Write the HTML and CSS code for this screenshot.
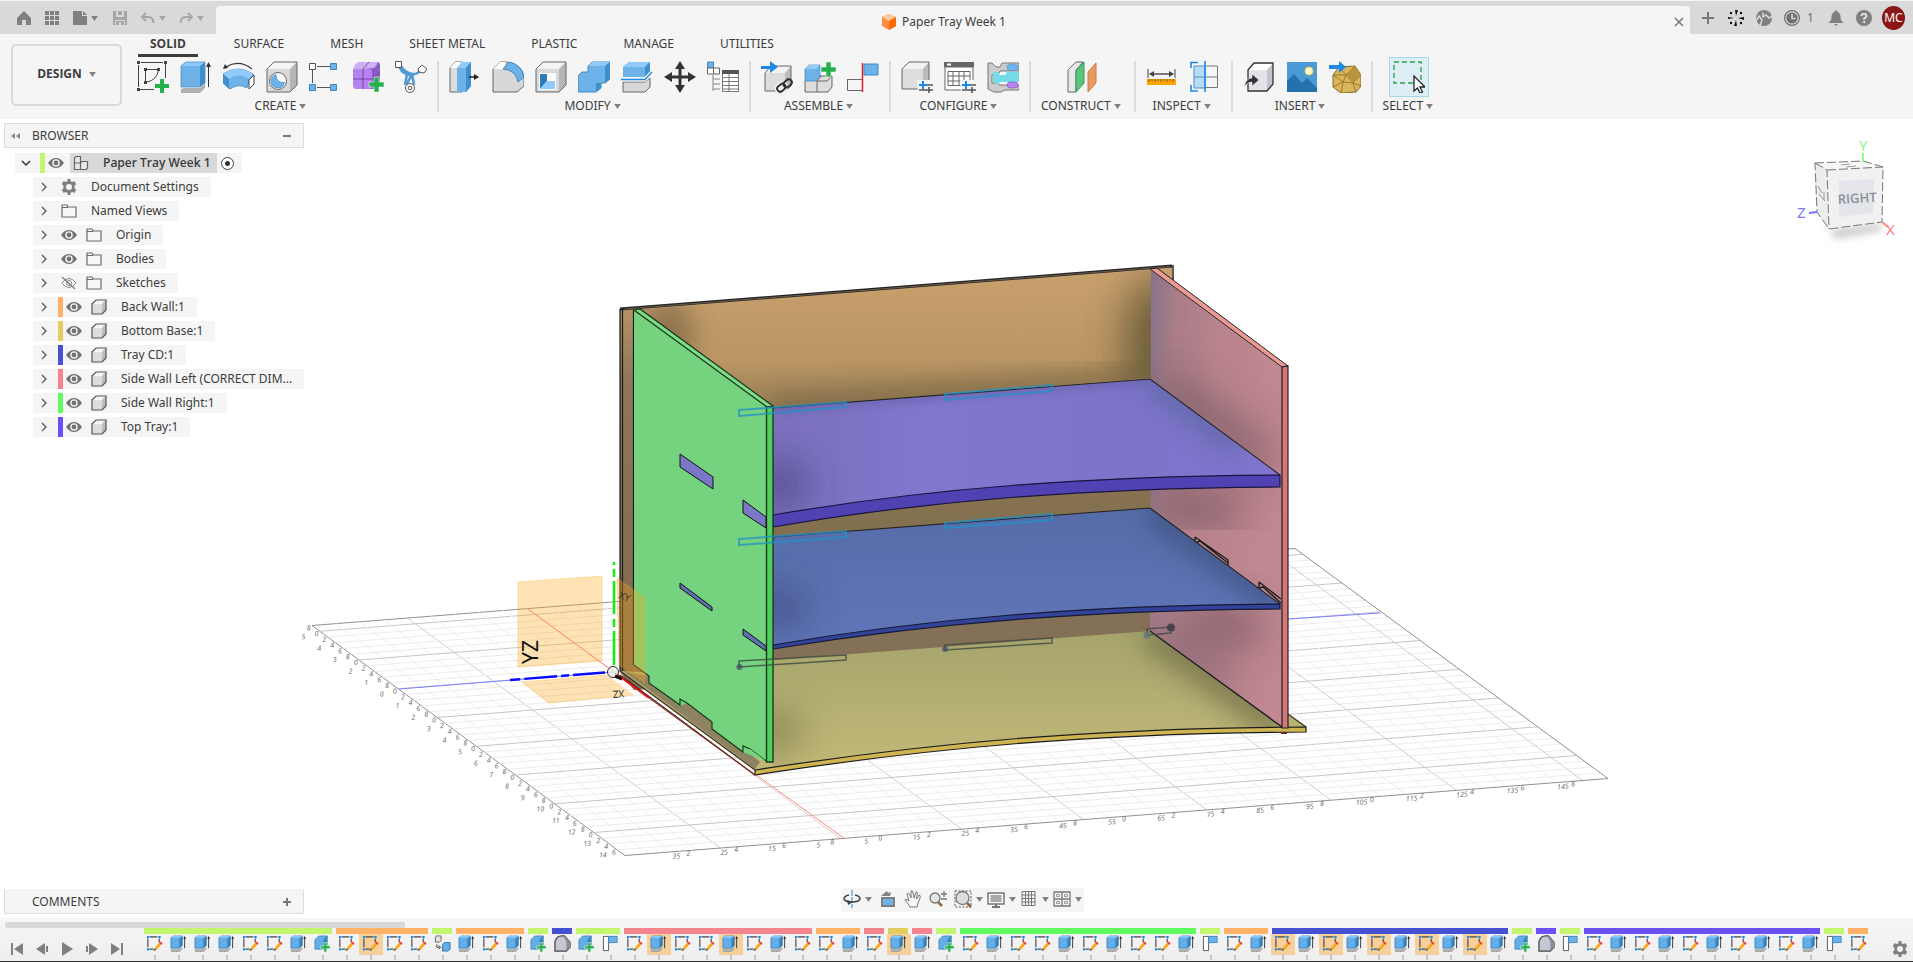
FILE: index.html
```html
<!DOCTYPE html>
<html lang="en">
<head>
<meta charset="utf-8">
<title>Paper Tray Week 1</title>
<link rel="stylesheet" href="styles.css">
</head>
<body>
<svg class="sprite" aria-hidden="true">
  <symbol id="caret" viewBox="0 0 8 6"><path d="M0 0H8L4 6Z" fill="currentColor"/></symbol>
  <symbol id="home" viewBox="0 0 16 16"><path d="M8 1 1 8V15H6V10H10V15H15V8Z" fill="currentColor"/></symbol>
  <symbol id="apps" viewBox="0 0 16 16"><path d="M1 1h4v4H1zM6 1h4v4H6zM11 1h4v4h-4zM1 6h4v4H1zM6 6h4v4H6zM11 6h4v4h-4zM1 11h4v4H1zM6 11h4v4H6zM11 11h4v4h-4z" fill="currentColor"/></symbol>
  <symbol id="file" viewBox="0 0 16 16"><path d="M1 1H10V6H15V15H1ZM11 1 15 5H11Z" fill="currentColor"/></symbol>
  <symbol id="save" viewBox="0 0 16 16"><path d="M1 1H4V7H12V1H15V15H13V10H3V15H1ZM6 1h4v4H6zM4 11h8v4H9v-3H7v3H4z" fill="currentColor"/></symbol>
  <symbol id="undo" viewBox="0 0 16 16"><path d="M6 3 2 7 6 11M2 7H8Q13 7 13.500 13" fill="none" stroke="currentColor" stroke-width="2"/></symbol>
  <symbol id="redo" viewBox="0 0 16 16"><path d="M10 3 14 7 10 11M14 7H8Q3 7 2.500 13" fill="none" stroke="currentColor" stroke-width="2"/></symbol>
  <symbol id="ocube" viewBox="0 0 16 18"><path d="M8 1 15 4V13L8 17 1 13V4Z" fill="#ff8f3f"/><path d="M8 1 15 4 8 8 1 4Z" fill="#ffc9a3"/><path d="M8 8 15 4V13L8 17Z" fill="#ff6a05"/></symbol>
  <symbol id="spark" viewBox="0 0 18 18"><g fill="#111"><path d="M8 1 11 1 9 7ZM7 17 10 17 9 11ZM1 8 7 9 1 10ZM17 8 11 9 17 11Z"/><circle cx="4" cy="4" r="1.2"/><circle cx="14" cy="4" r="1.2"/><circle cx="4" cy="14" r="1.2"/><circle cx="14" cy="14" r="1.2"/></g></symbol>
  <symbol id="ext" viewBox="0 0 18 18"><circle cx="9" cy="9" r="8" fill="currentColor"/><path d="M1 12 4 7 7 11 5 17M8 3.500V8.500M8 8 11 6 14 9 17.500 7" stroke="#d9d9d9" stroke-width="1.500" fill="none"/></symbol>
  <symbol id="clock" viewBox="0 0 18 18"><circle cx="9" cy="9" r="7.400" fill="none" stroke="currentColor" stroke-width="1.200"/><circle cx="9" cy="9" r="5.600" fill="currentColor"/><path d="M9 5V9.500H12.500" stroke="#d9d9d9" stroke-width="1.500" fill="none"/></symbol>
  <symbol id="bell" viewBox="0 0 18 18"><path d="M9 1Q10 1 10 2.500Q13.500 3.500 13.500 8Q13.500 12 16 13V14H2V13Q4.500 12 4.500 8Q4.500 3.500 8 2.500Q8 1 9 1ZM7 15H11L9 17Z" fill="currentColor"/></symbol>
  <symbol id="help" viewBox="0 0 18 18"><circle cx="9" cy="9" r="8" fill="currentColor"/><path d="M6.500 7Q6.500 4.800 9 4.800T11.500 7Q11.500 8.500 9.200 9.300V10.700M9.200 12V14" stroke="#e8e8e8" stroke-width="1.800" fill="none"/></symbol>
  <symbol id="chev" viewBox="0 0 10 10"><path d="M3 1 7 5 3 9" fill="none" stroke="#555" stroke-width="1.200"/></symbol>
  <symbol id="chevd" viewBox="0 0 10 10"><path d="M1 3 5 7 9 3" fill="none" stroke="#333" stroke-width="1.500"/></symbol>
  <symbol id="eye" viewBox="0 0 16 12"><path d="M0 6Q3.500 1 8 1T16 6Q12.500 11 8 11T0 6Z" fill="#727272"/><circle cx="8" cy="6" r="3.100" fill="#727272" stroke="#f5f5f5" stroke-width="1.400"/></symbol>
  <symbol id="eyeoff" viewBox="0 0 16 12"><path d="M1 6Q4 1.500 8 1.500T15 6Q12 10.500 8 10.500T1 6Z" fill="none" stroke="#8a8a8a"/><circle cx="8" cy="6" r="2.500" fill="none" stroke="#8a8a8a"/><path d="M1 0 14 12" stroke="#777" stroke-width="1.200"/></symbol>
  <symbol id="folder" viewBox="0 0 16 14"><path d="M1 1H6L7 3H15V13H1Z" fill="#f8f8f8" stroke="#6a6a6a" stroke-width="1.200"/><path d="M1 3.500H7" stroke="#6a6a6a"/></symbol>
  <symbol id="gear" viewBox="0 0 16 16"><path fill-rule="evenodd" d="M6.500 0H9.500V2.200L11.300 3 13.300 1.900 15.300 5.200 13.600 6.600V9.400L15.300 10.800 13.300 14.100 11.300 13 9.500 13.800V16H6.500V13.800L4.700 13 2.700 14.100 .7 10.800 2.400 9.400V6.600L.7 5.200 2.700 1.900 4.700 3 6.500 2.200ZM8 5A3 3 0 1 0 8 11A3 3 0 1 0 8 5Z" fill="#808080"/></symbol>
  <symbol id="body" viewBox="0 0 16 16"><path d="M1 5 5 1H15V11L11 15H1Z" fill="#dedede"/><path d="M1 5 5 1H15L11 5Z" fill="#f5f5f5"/><path d="M11 5 15 1V11L11 15Z" fill="#bdbdbd"/><path d="M1 5 5 1H15V11L11 15H1Z" fill="none" stroke="#555" stroke-width="1.200"/></symbol>
  <symbol id="asm" viewBox="0 0 16 16"><path d="M1.500 3 3 1.500H7.500V8H1.500ZM1.500 8H7.500V14.500H1.500ZM7.500 8 9 6.500H14.500V13L13 14.500H7.500Z" fill="#e8e8e8" stroke="#666" stroke-width="1.200"/></symbol>

  <symbol id="i-sketch" viewBox="0 0 32 32"><path d="M1.500 4V26M4 1.500H26M28.500 3V17M3 28.500H17" stroke="#444" stroke-width="1" fill="none"/><path d="M0 0h3v3H0zM27 0h3v3h-3zM0 27h3v3H0zM7 7h3v3H7zM20 7h3v3h-3zM7 20h3v3H7z" fill="#444"/><path d="M8.500 9V21M9 8.500H21M21.500 9Q20 19 10 21" stroke="#444" fill="none"/><path d="M23 18h4v5h5v4h-5v5h-4v-5h-5v-4h5z" fill="#22b14c"/></symbol>
  <symbol id="i-extrude" viewBox="0 0 32 32"><path d="M1 28 4 27H20L25 23V27L20 32H1Z" fill="#b0b0b0"/><path d="M1 5 6 1H25L20 5V26H1Z" fill="#6db3ea"/><path d="M1 5 6 1H25L20 5Z" fill="#90cbfb"/><path d="M20 5 25 1V22L20 26Z" fill="#3f8fcd"/><path d="M1 5 6 1H25V22L20 26H1Z" fill="none" stroke="#3f87c0" stroke-width=".7"/><path d="M28.500 26V4" stroke="#333"/><path d="M26 6 28.500 1 31 6Z" fill="#333"/></symbol>
  <symbol id="i-revolve" viewBox="0 0 32 32"><path d="M0 13Q15 3 30 13L31 16 27 17 24 27Q15 22 7 28L0 22Z" fill="#6db3ea" stroke="#2c7ab8" stroke-width=".7"/><path d="M0 13Q15 3 30 13L26 18Q15 11 6 18Z" fill="#90cbfb"/><path d="M0 13 6 18V28L0 22Z" fill="#3f8fcd"/><path d="M26 19 31 14V23L26 28Z" fill="#fff" stroke="#444"/><path d="M3 6Q16-2 29 8" fill="none" stroke="#333" stroke-width="1.200"/><path d="M0 8 2 3 5 7Z" fill="#333"/></symbol>
  <symbol id="i-hole" viewBox="0 0 32 32"><path d="M1 8 8 1H31V24L24 31H1Z" fill="#d8d8d8"/><path d="M1 8 8 1H31L24 8Z" fill="#f4f4f4"/><path d="M24 8 31 1V24L24 31Z" fill="#b5b5b5"/><path d="M1 8 8 1H31V24L24 31H1Z" fill="none" stroke="#666"/><circle cx="12" cy="20" r="8.500" fill="#fff" stroke="#666"/><path d="M10 13.500Q10 22 18.500 21.500Q17 27 12 27Q5.500 26.500 5 20Q5 15 10 13.500Z" fill="#6db3ea" stroke="#3f87c0" stroke-width=".7"/></symbol>
  <symbol id="i-pattern" viewBox="0 0 32 32"><path d="M8 5.500H21M3.500 9V22M8 26.500H21" stroke="#555"/><path d="M.5 2.500h6v6h-6z" fill="#fff" stroke="#555"/><path d="M21.500 2.500h6v6h-6zM.5 23.500h6v6h-6zM21.500 23.500h6v6h-6z" fill="#6db3ea" stroke="#3f87c0"/></symbol>
  <symbol id="i-form" viewBox="0 0 32 32"><path d="M1 9Q1 7 7 1H25Q28 1 28 4V22L22 28H5Q1 28 1 23Z" fill="#8a5bc5"/><path d="M1 9Q3 1 7 1H25Q27 2 22 7Z" fill="#d0b0f5"/><rect x="1" y="8" width="20" height="20" rx="4" fill="#b583f0"/><path d="M11 8V28M1 18H21M11 8 17 1M21 18 28 11M21 9V27" stroke="#6c3fa0" stroke-width=".9" fill="none"/><path d="M22 16h5v5h5v5h-5v5h-5v-5h-5v-5h5z" fill="#22b14c" stroke="#f5f5f5" stroke-width=".6"/></symbol>
  <symbol id="i-gen" viewBox="0 0 32 32"><path d="M4 4Q6 12 12 13L10 24M27 8Q22 14 17 13L19 24M12 13Q15 15 17 13M5 4Q10 12 17 13L12 23" fill="none" stroke="#4f9bd6" stroke-width="2.600"/><path d="M.5.5h6v6h-6zM23 8 27 4 32 8 29 12 24 11Z" fill="#fff" stroke="#555"/><circle cx="15" cy="27" r="4.500" fill="#fff" stroke="#555"/><circle cx="15" cy="27" r="1.800" fill="none" stroke="#555"/></symbol>
  <symbol id="i-presspull" viewBox="0 0 32 32"><path d="M1 7 6 1H13V31H1Z" fill="#ddd" stroke="#666"/><path d="M1 7 6 1H13L8 7Z" fill="#fff"/><path d="M8 7 13 1H22V25L17 31H8Z" fill="#6db3ea"/><path d="M8 7 13 1H22L17 7Z" fill="#90cbfb"/><path d="M17 7 22 1V25L17 31Z" fill="#3f8fcd"/><path d="M20 16H27" stroke="#222" stroke-width="1.500"/><path d="M25 13 30 16 25 19Z" fill="#222"/></symbol>
  <symbol id="i-fillet" viewBox="0 0 32 32"><path d="M1 8 8 1H14Q31 3 32 17V25L25 31H1Z" fill="#d8d8d8" stroke="#666"/><path d="M1 8 8 1H14L11 8Z" fill="#fff"/><path d="M11 8 17 1Q29 3 32 16L26 21Q24 9 11 8Z" fill="#6db3ea" stroke="#3f87c0"/></symbol>
  <symbol id="i-shell" viewBox="0 0 32 32"><path d="M1 8 8 1H31V24L24 31H1Z" fill="#d8d8d8"/><path d="M1 8 8 1H31L24 8Z" fill="#f4f4f4"/><path d="M24 8 31 1V24L24 31Z" fill="#b5b5b5"/><path d="M1 8 8 1H31V24L24 31H1Z" fill="none" stroke="#666"/><path d="M4 12h17v17H4z" fill="#fff"/><path d="M5 13H12V20L5 28Z" fill="#2c7ab8"/><path d="M5 28 12 20H20V28Z" fill="#90cbfb"/></symbol>
  <symbol id="i-combine" viewBox="0 0 32 32"><path d="M0 15 4 11H10V5L14 1H32V18L27 22H23V27L18 31H0Z" fill="#6db3ea" stroke="#3f87c0"/><path d="M10 5 14 1H32L27 5Z" fill="#90cbfb"/><path d="M27 5 32 1V18L27 22ZM18 22H23V27L18 31Z" fill="#3f8fcd"/></symbol>
  <symbol id="i-split" viewBox="0 0 32 32"><path d="M2 6 8 1H29V11L24 16H2Z" fill="#6db3ea"/><path d="M2 6 8 1H29L24 6Z" fill="#90cbfb"/><path d="M24 6 29 1V11L24 16Z" fill="#3f8fcd"/><path d="M2 21H24L29 17V26L24 31H2Z" fill="#d8d8d8" stroke="#666"/><path d="M0 18.500H24L31 11" fill="none" stroke="#f5f5f5" stroke-width="4"/><path d="M0 18.500H24L31 11" fill="none" stroke="#1e88e5" stroke-width="1.300"/></symbol>
  <symbol id="i-move" viewBox="0 0 32 32"><path d="M16 0 21 8H17.500V14.500H24V11L32 16 24 21V17.500H17.500V24H21L16 32 11 24H14.500V17.500H8V21L0 16 8 11V14.500H14.500V8H11Z" fill="#333"/></symbol>
  <symbol id="i-params" viewBox="0 0 32 32"><path d="M.5 1h6v6h-6z" fill="#6db3ea" stroke="#3f87c0"/><path d="M.5 7h6v6h-6zM6.500 7h6v6h-6z" fill="#fff" stroke="#666"/><path d="M6 14V30M6 18H13M6 23H13M6 28H13" stroke="#888" fill="none"/><path d="M15.500 9.500h16v21h-16z" fill="#fff" stroke="#777"/><path d="M15 9h17v4H15z" fill="#555"/><path d="M16 16.500H31M16 20.500H31M16 24.500H31M16 28H31M22 13V31" stroke="#777"/></symbol>
  <symbol id="i-insertc" viewBox="0 0 32 32"><path d="M4 12 10 5H30V25L24 30H4Z" fill="#ddd"/><path d="M4 12 10 5H30L24 12Z" fill="#f2f2f2"/><path d="M24 12 30 5V25L24 30Z" fill="#bbb"/><path d="M4 12 10 5H30V25L24 30H4Z" fill="none" stroke="#666"/><path d="M0 5H9V0L17 6 9 12V8H0Z" fill="#1e88e5"/><g fill="none" stroke="#f5f5f5" stroke-width="5"><rect x="16" y="24" width="9" height="6" rx="3" transform="rotate(-40 20 27)"/></g><g fill="none" stroke="#333" stroke-width="2"><rect x="16" y="24" width="9" height="6" rx="3" transform="rotate(-40 20 27)"/><rect x="22" y="19" width="9" height="6" rx="3" transform="rotate(-40 27 22)"/></g></symbol>
  <symbol id="i-newc" viewBox="0 0 32 32"><path d="M1 20 5 16H12L16 15H28V26L24 31H1Z" fill="#ddd" stroke="#666"/><path d="M13 20V31M13 20 17 15M13 20H23L28 15" stroke="#666" fill="none"/><path d="M1 8 5 4H16V15L12 20H1Z" fill="#6db3ea" stroke="#3f87c0" stroke-width=".7"/><path d="M1 8 5 4H16L12 8Z" fill="#90cbfb"/><path d="M22 1h5v5h5v5h-5v5h-5v-5h-5V6h5z" fill="#22b14c" stroke="#f5f5f5" stroke-width=".6"/></symbol>
  <symbol id="i-joint" viewBox="0 0 32 32"><path d="M.5 18.500H15M.5 18V29.500H15" stroke="#666" fill="none"/><path d="M17 3h14v11H17z" fill="#6db3ea" stroke="#3f87c0"/><path d="M15.500 2V31" stroke="#d02030" stroke-width="1.500"/></symbol>
  <symbol id="sliders" viewBox="0 0 32 32"><path d="M16 19h16v13H17z" fill="#f5f5f5"/><path d="M18 24H26M22 20V28" stroke="#1e88e5" stroke-width="2"/><path d="M26 24H32M18 29H32M28 26V32" stroke="#555" stroke-width="1.600"/></symbol>
  <symbol id="i-config" viewBox="0 0 32 32"><path d="M1 8 8 1H28V22L22 28H1Z" fill="#ddd"/><path d="M1 8 8 1H28L22 8Z" fill="#f2f2f2"/><path d="M22 8 28 1V22L22 28Z" fill="#bbb"/><path d="M1 8 8 1H28V22L22 28H1Z" fill="none" stroke="#666"/><use href="#sliders"/></symbol>
  <symbol id="i-ctable" viewBox="0 0 32 32"><path d="M1 6h28v23H1z" fill="#fff" stroke="#666"/><path d="M0 1h30v5H0z" fill="#666"/><path d="M3 2.500h4v2H3z" fill="#fff"/><path d="M4 10.500H26V24.500H4ZM4 15H26M4 20H26M9 10V25M15 10V25M20 10V25" stroke="#666" fill="none"/><use href="#sliders"/></symbol>
  <symbol id="i-rule" viewBox="0 0 32 32"><path d="M1 2H5L9 6H13L15 2H32V10H13L11 14H5V22H10L13 24H32V29H18L14 31H7L1 28Z" fill="#ccc" stroke="#777"/><path d="M6 11H11L13 14H18L20 11H32V21H13L11 23H9L6 20Z" fill="#74dce8"/><rect x="20" y="3.500" width="11" height="6" rx="3" fill="#6fb5f5" stroke="#4a90d0" stroke-width=".6"/><rect x="20" y="21" width="11" height="6" rx="3" fill="#b583f0" stroke="#8755c0" stroke-width=".6"/></symbol>
  <symbol id="i-plane" viewBox="0 0 32 32"><path d="M2 9 10 1H17L10 9V31H2Z" fill="#e8e8e8" stroke="#666"/><path d="M10 10 18 1V22L10 31Z" fill="#5bc47f" stroke="#2f9a55"/><path d="M22 11 30 2V22L22 31Z" fill="#e79a63" stroke="#c97a40"/></symbol>
  <symbol id="i-measure" viewBox="0 0 32 32"><path d="M2 8V17M29 8V17" stroke="#444"/><path d="M4 13H27" stroke="#444" stroke-width="1.400"/><path d="M3 13 8 10V16ZM28 13 23 10V16Z" fill="#444"/><path d="M1 18h29v6H1z" fill="#ffa500"/><path d="M3 18V21M6 18V20M9 18V21M12 18V20M15 18V21M18 18V20M21 18V21M24 18V20M27 18V21" stroke="#7a5000"/></symbol>
  <symbol id="i-section" viewBox="0 0 32 32"><path d="M17 5H28.500V26.500H17M17 16H28" fill="none" stroke="#777"/><path d="M5 5h11v22H5z" fill="#b9dcf5" stroke="#4a90d0"/><path d="M5 16H16" stroke="#4a90d0"/><path d="M2 7V1.500H9M2 24V30H9M16 0V31" fill="none" stroke="#1e88e5" stroke-width="1.600"/></symbol>
  <symbol id="i-derive" viewBox="0 0 32 32"><path d="M5 9 11 2H30V23L24 30H5Z" fill="#e3e3e8"/><path d="M5 9 11 2H30L24 9Z" fill="#fff"/><path d="M24 9 30 2V23L24 30Z" fill="#c3c3cc"/><path d="M5 9 11 2H30V23L24 30H5Z" fill="none" stroke="#333" stroke-width="1.300"/><path d="M1 26Q3 17 9 17V13L16 19 9 25V21Q4 21 1 26Z" fill="#333" stroke="#f5f5f5" stroke-width=".6"/></symbol>
  <symbol id="i-image" viewBox="0 0 32 32"><path d="M1 1h30v30H1z" fill="#4a9ad6"/><path d="M1 20 8 13 16 22 21 17 31 27V31H1Z" fill="#2471ab"/><circle cx="23" cy="10" r="4" fill="#fff6c5" stroke="#f0d060"/></symbol>
  <symbol id="i-mesh" viewBox="0 0 32 32"><path d="M4 14 10 6 26 5 32 14V25L27 31 12 32 4 26Z" fill="#d8b65c" stroke="#8a6b20"/><path d="M4 14 17 14 32 14M10 6 17 14 26 5M4 26 14 21 17 14 24 22 32 25M14 21 12 32M24 22 27 31M14 21 24 22M4 14 14 21M32 14 24 22" stroke="#8a6b20" fill="none" stroke-width=".8"/><path d="M17 14 26 5 32 14 24 22Z" fill="#b8963c"/><path d="M0 4H10V0L17 6 10 12V8H0Z" fill="#1e88e5"/></symbol>
  <symbol id="i-select" viewBox="0 0 32 32"><path d="M1 1H28V22H1Z" fill="none" stroke="#22a54c" stroke-width="1.300" stroke-dasharray="5 3"/><path d="M21 15V30L24.500 27 27 32 29.500 31 27 26H32Z" fill="#fff" stroke="#222" stroke-width="1.300"/></symbol>

  <symbol id="t-s" viewBox="0 0 18 18"><path d="M2 4V13M4 2H12M14 4V8M4 15H8" stroke="#444" stroke-width="1.200"/><path d="M1 1h2.500v2.500H1zM13 1h2.500v2.500H13zM1 14h2.500v2.500H1z" fill="#1e88e5"/><path d="M9 14 14 8 16 10 11 16Z" fill="#ffa514"/><path d="M14 8 15.500 7 17.500 9 16 10.500Z" fill="#e83a3a"/><path d="M9 14 11 16 8 17Z" fill="#555"/></symbol>
  <symbol id="t-e" viewBox="0 0 18 18"><path d="M1 15H10L13 13V15L10 18H1Z" fill="#aaa"/><path d="M1 3 3 1H13V11L10 14H1Z" fill="#63aee8" stroke="#2f78b0" stroke-width=".7"/><path d="M10 4 13 1V11L10 14Z" fill="#3580b8"/><path d="M1 3 3 1H13L10 3Z" fill="#8cc8f8"/><path d="M15.500 2V14" stroke="#333"/><path d="M14 4 15.500 1 17 4Z" fill="#333"/></symbol>
  <symbol id="t-n" viewBox="0 0 18 18"><path d="M1 5 5 1H14V11L10 15H1Z" fill="#63aee8" stroke="#2f78b0" stroke-width=".7"/><path d="M10 5 14 1V11L10 15Z" fill="#3580b8"/><path d="M10.500 8h3v3.500H17v3h-3.500V18h-3v-3.500H7v-3h3.500z" fill="#22b14c" stroke="#f5f5f5" stroke-width=".6"/></symbol>
  <symbol id="t-j" viewBox="0 0 18 18"><path d="M1.500 1.500H7V16.500H1.500Z" fill="#fff" stroke="#555"/><path d="M7 1.500H16V8H7Z" fill="#6db3ea" stroke="#3f87c0"/></symbol>
  <symbol id="t-g" viewBox="0 0 18 18"><path d="M1 16V7Q3 1 8 1H11L17 8V13L13 17H1Z" fill="#c5c7d2" stroke="#444" stroke-width="1.300"/><path d="M8 1H11L17 8V13L13 17V8Q12 3 8 1Z" fill="#8e909c"/></symbol>
  <symbol id="t-c" viewBox="0 0 18 18"><path d="M1.500 2 3 1H7.500V6L6 7.500H1.500Z" fill="#e5e5e5" stroke="#666"/><path d="M3 10V13H6M5 11 7 13 5 15" stroke="#333" fill="none"/><path d="M9 10 11 8H17V15L15 17H9Z" fill="#63aee8" stroke="#2f78b0"/></symbol>
</svg>

<header class="titlebar">
  <div class="quick">
    <button class="ib" aria-label="Home"><svg><use href="#home"/></svg></button>
    <button class="ib" aria-label="Data panel"><svg><use href="#apps"/></svg></button>
    <button class="ib menu" aria-label="File"><svg><use href="#file"/></svg><svg class="caret"><use href="#caret"/></svg></button>
    <button class="ib dim" aria-label="Save"><svg><use href="#save"/></svg></button>
    <button class="ib menu dim" aria-label="Undo"><svg><use href="#undo"/></svg><svg class="caret"><use href="#caret"/></svg></button>
    <button class="ib menu dim" aria-label="Redo"><svg><use href="#redo"/></svg><svg class="caret"><use href="#caret"/></svg></button>
  </div>
  <div class="doc-tab">
    <div class="doc-name"><svg><use href="#ocube"/></svg><span>Paper Tray Week 1</span></div>
    <button class="close" aria-label="Close"><svg viewBox="0 0 10 10"><path d="M1 1 9 9M9 1 1 9" stroke="#777" stroke-width="1.500"/></svg></button>
  </div>
  <div class="account">
    <button class="ib" aria-label="New tab"><svg viewBox="0 0 18 18"><path d="M9 3V15M3 9H15" stroke="#777" stroke-width="2"/></svg></button>
    <button class="ib" aria-label="Assistant"><svg><use href="#spark"/></svg></button>
    <button class="ib" aria-label="Extensions"><svg><use href="#ext"/></svg></button>
    <button class="ib jobs" aria-label="Job status"><svg><use href="#clock"/></svg><span>1</span></button>
    <button class="ib" aria-label="Notifications"><svg><use href="#bell"/></svg></button>
    <button class="ib" aria-label="Help"><svg><use href="#help"/></svg></button>
    <button class="avatar">MC</button>
  </div>
</header>

<section class="ribbon">
  <button class="workspace">DESIGN <svg class="caret"><use href="#caret"/></svg></button>
  <div class="ribbon-main">
    <nav class="tabs">
      <button class="active">SOLID</button><button>SURFACE</button><button>MESH</button><button>SHEET METAL</button><button>PLASTIC</button><button>MANAGE</button><button>UTILITIES</button>
    </nav>
    <div class="groups" id="groups"></div>
  </div>
</section>

<main class="stage">
  <svg class="scene" viewBox="0 119 1913 799" role="img" aria-label="Paper tray model">
    <defs>
      <filter id="b20" x="-100%" y="-100%" width="300%" height="300%"><feGaussianBlur stdDeviation="20"/></filter>
      <filter id="b12" x="-60%" y="-60%" width="220%" height="220%"><feGaussianBlur stdDeviation="12"/></filter>
      <filter id="b4" x="-60%" y="-60%" width="220%" height="220%"><feGaussianBlur stdDeviation="4"/></filter>
      <linearGradient id="gBack" x1="0" y1="0" x2="0" y2="1"><stop offset="0" stop-color="#c8a06e"/><stop offset=".22" stop-color="#bb9664"/><stop offset=".36" stop-color="#8f7853"/><stop offset=".6" stop-color="#83704f"/><stop offset="1" stop-color="#84705a"/></linearGradient>
      <linearGradient id="gStrip" x1="0" y1="0" x2="0" y2="1"><stop offset="0" stop-color="#b59367"/><stop offset=".2" stop-color="#8d7757"/><stop offset="1" stop-color="#7f6a50"/></linearGradient>
      <linearGradient id="gPink" x1="0" y1="0" x2="1" y2=".2"><stop offset="0" stop-color="#85748a"/><stop offset=".2" stop-color="#a97c88"/><stop offset=".5" stop-color="#b8838c"/><stop offset="1" stop-color="#c18891"/></linearGradient>
      <linearGradient id="gPurple" x1="0" y1="0" x2="1" y2="0"><stop offset="0" stop-color="#7a70bd"/><stop offset=".3" stop-color="#8177cd"/><stop offset=".7" stop-color="#7d74ca"/><stop offset="1" stop-color="#8175cd"/></linearGradient>
      <linearGradient id="gBlue" x1="0" y1="0" x2="0" y2="1"><stop offset="0" stop-color="#566ca8"/><stop offset="1" stop-color="#6076b8"/></linearGradient>
      <linearGradient id="gBase" x1="0" y1="0" x2="0" y2="1"><stop offset="0" stop-color="#a5a46c"/><stop offset="1" stop-color="#c2ba78"/></linearGradient>
      <clipPath id="cBack"><path d="M634 310 1151 270V378L773 408 634 310Z"/></clipPath>
      <clipPath id="cPink"><path d="M1151 270 1282 367V727L1150 631Z"/></clipPath>
      <clipPath id="cTop"><path d="M773 408 1150 379 1280 475C1090 476 930 488 773 515Z"/></clipPath>
      <clipPath id="cMid"><path d="M773 537 1150 508 1280 604C1090 605 930 618 773 645Z"/></clipPath>
      <clipPath id="cBase"><path d="M773 660 1150 630 1282 727C1090 728 930 743 773 768Z"/></clipPath>
    </defs>
    <g id="grid"></g>
    <g class="axis-lines">
      <path d="M399 689 614 672M1288 619 1380 613" stroke="#8080ff"/>
      <path d="M528 609 614 672M755 774 845 839" stroke="#ff8a80"/>
    </g>
    <path d="M620 309 1172 266V281L1154 290V660L634 690 620 672Z" fill="url(#gBack)"/>
    <g clip-path="url(#cBack)">
      <ellipse cx="668" cy="335" rx="26" ry="36" fill="#6f5c3e" opacity=".6" filter="url(#b12)"/>
      <ellipse cx="1160" cy="345" rx="36" ry="70" fill="#4f4a2c" opacity=".75" filter="url(#b20)"/>
      <path d="M773 408 1150 379" stroke="#6f5f40" stroke-width="22" opacity=".6" filter="url(#b12)"/>
    </g>
    <path d="M620 309H633V672H620Z" fill="url(#gStrip)"/>
    <path d="M620 309V671M622.500 309V671M633.500 310V665" stroke="#181818" stroke-width="1.200"/>
    <path d="M620 309 1172 266" stroke="#262626" stroke-width="3"/><path d="M624 309 1170 266.500" stroke="#786850" stroke-width=".8"/>
    <path d="M1173 265V282" stroke="#222" stroke-width="1.500"/>
    <path d="M620 671 755 770C930 743 1090 728 1306 727L1288 714 1150 631 773 660 640 672Z" fill="url(#gBase)"/>
    <path d="M625 672 649 676 712 722 760 762 755 769Z" fill="#8e8360"/>
    <g clip-path="url(#cBase)"><ellipse cx="772" cy="732" rx="30" ry="18" fill="#6f6b42" opacity=".8" filter="url(#b20)"/><path d="M1150 631 1282 727" stroke="#706c48" stroke-width="34" opacity=".7" filter="url(#b12)"/></g>
    <path d="M755 770C930 743 1090 728 1306 727V732C1090 733 930 748 755 775Z" fill="#cfb452" stroke="#1b1b1b" stroke-width="1.200"/>
    <path d="M1288 714 1306 727M620 671 755 770M620 675 755 775" stroke="#3b2a1c" stroke-width="1.200" fill="none"/>
    <path d="M1151 270 1282 367V727L1150 631Z" fill="url(#gPink)"/>
    <g clip-path="url(#cPink)"><path d="M1160 385 1270 465" stroke="#6a535b" stroke-width="34" opacity=".7" filter="url(#b20)"/><path d="M1160 500 1240 515" stroke="#5f4a53" stroke-width="34" opacity=".6" filter="url(#b20)"/><ellipse cx="1225" cy="626" rx="44" ry="18" fill="#5f4a57" opacity=".65" filter="url(#b20)"/><path d="M1160 640 1230 690" stroke="#6b5765" stroke-width="30" opacity=".5" filter="url(#b20)"/></g>
    <path d="M1150 631 1282 727M1195 537 1228 560V566M1195 537V543L1200 541 1228 563M1259 582 1281 599M1259 582V588L1263 587 1281 603" stroke="#1c1c1c" stroke-width="1.400" fill="none"/>
    <path d="M773 537 1150 508 1280 604C1090 605 930 618 773 645Z" fill="url(#gBlue)"/>
    <g clip-path="url(#cMid)"><ellipse cx="780" cy="608" rx="26" ry="18" fill="#34426f" opacity=".85" filter="url(#b20)"/><path d="M1150 508 1282 604" stroke="#3a507c" stroke-width="28" opacity=".7" filter="url(#b12)"/></g>
    <path d="M773 537 1150 508 1280 604" fill="none" stroke="#222" stroke-width="1.100"/>
    <path d="M773 645C930 618 1090 605 1280 604V609C1090 610 930 623 773 649Z" fill="#34439a" stroke="#151a35" stroke-width="1.200"/>
    <path d="M773 408 1150 379 1280 475C1090 476 930 488 773 515Z" fill="url(#gPurple)"/>
    <g clip-path="url(#cTop)"><ellipse cx="780" cy="484" rx="26" ry="18" fill="#443e76" opacity=".9" filter="url(#b20)"/><path d="M1150 379 1240 445" stroke="#5a66a0" stroke-width="24" opacity=".8" filter="url(#b12)"/><path d="M773 408 1150 379" stroke="#625a9c" stroke-width="8" opacity=".6" filter="url(#b4)"/></g>
    <path d="M773 408 1150 379 1280 475" fill="none" stroke="#222" stroke-width="1.100"/>
    <path d="M773 515C930 488 1090 476 1280 475V487C1090 488 930 500 773 527Z" fill="#5042b2" stroke="#1a1540" stroke-width="1.200"/>
    <path d="M1150 269 1157 268 1288 366 1282 367Z" fill="#ec9a94" stroke="#222" stroke-width="1"/>
    <path d="M1282 367 1288 366V728H1282Z" fill="#d87578" stroke="#222" stroke-width="1.200"/><path d="M1281 733H1287" stroke="#6b2c30" stroke-width="2"/>
    <path d="M634 310 766 407V761L743 752 712 729V722L687 703 680 706 649 683V676L634 665Z" fill="#75d37f"/>
    <path d="M634 665 649 676V683L680 705V699L687 703 712 722V729L743 752V746L750 749 766 761" fill="none" stroke="#163a1c" stroke-width="1.200"/>
    <path d="M743 752 750 749 766 761Z" fill="#75d37f"/>
    <path d="M634 310 640 309 773 406 767 407Z" fill="#7edb86" stroke="#1a3a1e" stroke-width="1.200"/>
    <path d="M766.500 407H773V762H766.500Z" fill="#50cf5f" stroke="#1a3a1e" stroke-width="1.400"/>
    <path d="M680 454 713 477V489L680 467ZM743 500 766 517V528L743 513Z" fill="#7a78c6" stroke="#111"/>
    <path d="M680 583 712 607V611L680 588ZM743 629 766 646V651L743 635Z" fill="#5f72b0" stroke="#111"/>
    <g class="hint"><path d="M739 410 846 402V407L739 416ZM945 394 1052 385V391L945 400ZM739 539 846 531V537L739 545ZM945 523 1052 514V520L945 528Z"/></g>
    <g fill="none" stroke="#3d4a42" stroke-width="1.500" opacity=".8"><path d="M739 661 846 655V660L739 667ZM945 645 1052 638V643L945 650ZM1147 629 1171 627V633L1147 635Z"/></g>
    <g opacity=".8"><circle cx="739.500" cy="667" r="3" fill="#456"/><circle cx="945" cy="649" r="3" fill="#456"/><circle cx="1147" cy="635" r="3.500" fill="#607a75"/><circle cx="1171" cy="627.500" r="4" fill="#3a3a40"/></g>
    <g fill="#ffa719" fill-opacity=".32" stroke="#ffa719" stroke-opacity=".3"><path d="M518 582 602 576V661L518 667ZM522 682 606 675 633 695 549 703ZM617 578 645 598V683L619 665Z"/></g>
    <path d="M614 562V665" stroke="#12ee12" stroke-width="2.500" stroke-dasharray="3 4 8 4 33 5 8 4 40"/>
    <path d="M605 672.500 510 680" stroke="#0a0aff" stroke-width="2.500" stroke-dasharray="32 4 8 4 33 4 12"/>
    <path d="M615 673 649 698" stroke="#f01010" stroke-width="2"/><path d="M649 698 755 775" stroke="#a02018"/>
    <circle cx="613" cy="672" r="5.500" fill="#eee" fill-opacity=".8" stroke="#333"/><path d="M615 676 622 679" stroke="#111" stroke-width="3"/>
    <text class="plane" transform="translate(538 664) rotate(-90)">YZ</text>
    <text class="plane-s" transform="translate(624 690) rotate(176)">XZ</text><text class="plane-s" transform="translate(618 598) rotate(20)">XY</text>
    <g id="ruler"></g>

    <g class="viewcube">
      <path d="M1817 214 1829 231 1884 224 1880 230 1836 238Z" fill="#777" opacity=".5" filter="url(#b4)"/>
      <path d="M1815 163 1863 161 1883 167 1827 170Z" fill="#f7f7f7"/><path d="M1815 163 1827 170 1829 229 1817 212Z" fill="#ededed"/><path d="M1827 170 1883 167 1882 222 1829 229Z" fill="#f1f1f1"/>
      <path d="M1839 181 1874 179 1873 213 1839 217Z" fill="#e4e5ea"/>
      <path d="M1815 163 1863 161 1883 167 1882 222 1829 229 1817 212ZM1815 163 1827 170 1829 229M1827 170 1883 167" fill="none" stroke="#777" stroke-dasharray="9 3"/>
      <path d="M1863 153V162" stroke="#8f8" stroke-width="2"/><path d="M1809 213 1817 212" stroke="#77f" stroke-width="2"/><path d="M1882 222 1888 227" stroke="#f88" stroke-width="2"/>
      <path d="M1818 186 1822 193M1819 194 1825 201M1824 192V200M1841 165 1850 164M1846 167 1856 166" stroke="#999" fill="none"/>
      <text class="face" transform="translate(1838 204) rotate(-3)">RIGHT</text>
      <text x="1859" y="151" fill="#8cf58c">Y</text><text x="1797" y="218" fill="#7a7af8">Z</text><text x="1886" y="235" fill="#f98080">X</text>
    </g>
  </svg>

  <aside class="browser">
    <div class="panel-head"><svg class="collapse" viewBox="0 0 10 6"><path d="M4 0V6L0 3ZM9 0V6L5 3Z" fill="#888"/></svg><h2>BROWSER</h2><button aria-label="Minimize"><svg viewBox="0 0 8 8"><path d="M0 4H8" stroke="#777" stroke-width="2"/></svg></button></div>
    <ul class="tree" id="tree"></ul>
  </aside>

  <div class="comments panel-head"><h2>COMMENTS</h2><button aria-label="Add comment"><svg viewBox="0 0 8 8"><path d="M0 4H8M4 0V8" stroke="#777" stroke-width="2"/></svg></button></div>

  <div class="navbar">
    <button class="drop" aria-label="Orbit"><svg viewBox="0 0 18 18"><path d="M9 0V18" stroke="#6db3ea" stroke-width="1.600" stroke-dasharray="6 1"/><path d="M12 5Q17 6 17 9Q16 12 9 12T1 9Q1 6 6 5" fill="none" stroke="#444" stroke-width="1.500"/><path d="M4 10 10 12 5 15Z" fill="#444"/></svg><svg class="caret"><use href="#caret"/></svg></button>
    <button aria-label="Look at"><svg viewBox="0 0 18 18"><path d="M2 7H16V17H2ZM2 6 8 1 9 3 12 2 11 6Z" fill="#808080"/><path d="M4 9h10v6H4z" fill="#6db3ea"/></svg></button>
    <button aria-label="Pan"><svg viewBox="0 0 18 18"><path d="M6 17Q4 13 1 10Q1 8 5 11L3 4Q4 2 6 5L7 8 7 1Q9 0 9 3L10 8 12 2Q14 1 13 5L12.500 9 15 5Q17 5 16 8L14 13 13 17Z" fill="#f8f8f8" stroke="#777"/></svg></button>
    <button aria-label="Zoom"><svg viewBox="0 0 18 18"><circle cx="6" cy="8" r="5" fill="#e5e5e5" stroke="#777" stroke-width="1.300"/><path d="M9 12 13 16" stroke="#8a6a4a" stroke-width="2.500"/><path d="M12 4H18M15 1V7M12 9H18" stroke="#777" stroke-width="1.300"/></svg></button>
    <button class="drop" aria-label="Fit"><svg viewBox="0 0 18 18"><path d="M1 1H17V17H1Z" fill="none" stroke="#555" stroke-dasharray="2 1.500"/><circle cx="8.500" cy="8" r="6.500" fill="#ddd" stroke="#777" stroke-width="1.300"/><path d="M13 13 17 17" stroke="#8a6a4a" stroke-width="2.500"/></svg><svg class="caret"><use href="#caret"/></svg></button>
    <button class="drop" aria-label="Display settings"><svg viewBox="0 0 18 18"><path d="M1 3H17V14H1Z" fill="#f5f5f5" stroke="#777" stroke-width="1.500"/><path d="M3.500 5h11v7h-11z" fill="#aaa"/><path d="M5 17H13M9 14V17" stroke="#777" stroke-width="2"/></svg><svg class="caret"><use href="#caret"/></svg></button>
    <button class="drop" aria-label="Grid and snaps"><svg viewBox="0 0 18 18"><path d="M2 1.500H15V15.500H2ZM5.500 1V16M8.500 1V16M11.500 1V16M2 5H15M2 8.500H15M2 12H15" fill="none" stroke="#777"/></svg><svg class="caret"><use href="#caret"/></svg></button>
    <button class="drop" aria-label="Viewports"><svg viewBox="0 0 18 18"><path d="M1 2H17V16H1ZM9 2V16M1 9H17" fill="none" stroke="#777" stroke-width="1.300"/><path d="M3.500 4.500h3v2h-3zM11.500 4.500h3v2h-3zM3.500 11.500h3v2h-3zM11.500 11.500h3v2h-3z" fill="none" stroke="#999"/></svg><svg class="caret"><use href="#caret"/></svg></button>
  </div>
</main>

<footer class="timeline">
  <div class="scroll"><div class="thumb"></div></div>
  <div class="timeline-row">
    <div class="playback">
      <button aria-label="Start"><svg viewBox="0 0 14 14"><path d="M1 1H3V13H1ZM13 1V13L4 7Z"/></svg></button>
      <button aria-label="Step back"><svg viewBox="0 0 14 14"><path d="M10 1V13L1 7ZM11 4H13V10H11Z"/></svg></button>
      <button aria-label="Play"><svg viewBox="0 0 14 14"><path d="M2 0 13 7 2 14Z"/></svg></button>
      <button aria-label="Step forward"><svg viewBox="0 0 14 14"><path d="M4 1V13L13 7ZM1 4H3V10H1Z"/></svg></button>
      <button aria-label="End"><svg viewBox="0 0 14 14"><path d="M11 1H13V13H11ZM1 1V13L10 7Z"/></svg></button>
    </div>
    <div class="track" id="track"></div>
    <button class="settings" aria-label="Timeline settings"><svg><use href="#gear"/></svg></button>
  </div>
</footer>
<script src="script.js"></script>
</body>
</html>
```
FILE: styles.css
```css
* { box-sizing: border-box; }
html, body { height: 100%; margin: 0; }
body { display: flex; flex-direction: column; overflow: hidden; background: #fff; color: #3c3c3c; font: 12px/16px "Noto Sans", "Open Sans", sans-serif; }
button { margin: 0; padding: 0; border: 0; background: none; color: inherit; font: inherit; display: flex; align-items: center; }
h2 { margin: 0; font: inherit; }
ul { margin: 0; padding: 0; list-style: none; }
svg { display: block; flex: none; }
.sprite { position: absolute; width: 0; height: 0; }
.caret { width: 7px; height: 5px; color: #808080; }

.titlebar { display: flex; height: 34px; flex: none; background: #d9d9d9; border-top: 1px solid #f5f5f5; padding-top: 5px; }
.quick { width: 216px; display: flex; align-items: center; gap: 12px; padding: 0 0 4px 16px; }
.quick .ib svg:first-child { width: 16px; height: 16px; }
.ib { color: #808080; }
.ib.menu { gap: 3px; }
.quick .menu:not(.dim) { margin-right: 2px; }
.ib.dim, .ib.dim .caret { color: #a6a6a6; }
.doc-tab { flex: 1; display: flex; align-items: center; background: #f5f5f5; border-radius: 4px 4px 0 0; padding: 4px 6px 0 0; }
.doc-name { flex: 1; display: flex; justify-content: center; align-items: center; gap: 5px; padding-right: 3px; }
.doc-name svg { width: 16px; height: 18px; }
.close svg { width: 10px; height: 10px; }
.account { width: 223px; display: flex; align-items: center; gap: 10px; padding: 0 8px 4px 9px; }
.account .ib svg { width: 18px; height: 18px; }
.jobs { gap: 6px; margin-right: 3px; }
.account .jobs { color: #707070; }
.avatar { width: 24px; height: 24px; margin-left: -1px; border-radius: 50%; background: #8b1616; color: #fff; justify-content: center; }

.ribbon { display: flex; flex: none; height: 85px; background: #f5f5f5; padding-left: 11px; }
.workspace { width: 111px; height: 62px; margin-top: 10px; padding-bottom: 2px; border: 2px solid #d9d9d9; border-radius: 5px; justify-content: center; gap: 7px; font-family: "Open Sans", sans-serif; font-weight: 700; }
.ribbon-main { flex: 1; padding-left: 5px; }
.tabs { display: flex; gap: 22px; padding-left: 11px; }
.tabs button { height: 23px; padding: 0 12px; border-bottom: 3px solid transparent; line-height: 20px; }
.tabs .active { margin-right: 2px; border-color: #3c3c3c; font-family: "Open Sans", sans-serif; font-weight: 700; }
.groups { display: flex; padding-top: 4px; }
.group { display: flex; flex-direction: column; align-items: center; height: 51px; padding: 0 10px; border-right: 2px solid #dcdcdc; }
.group:last-child { border: 0; }
.tools { display: flex; gap: 11px; flex: none; height: 32px; align-items: center; }
.tools svg { width: 32px; height: 32px; }
.tools .on { padding: 3px; border: 1px solid #a5d8f0; background: #dfeef6; }
.group-label { margin-top: 5px; gap: 3px; padding-right: 3px; }

.stage { flex: 1; min-height: 0; position: relative; }
.scene { width: 100%; height: 100%; }
.axis-lines path { stroke-width: 1; }
.hint path { fill: none; stroke: #2391c8; stroke-width: 2; opacity: .75; }
.plane { font: 21px "Noto Sans", sans-serif; fill: #111; }
.plane-s { font: 10px "Noto Sans", sans-serif; fill: #333; }
.viewcube text { font: 15px "Noto Sans", sans-serif; }
.viewcube .face { font: 600 13px "Open Sans", sans-serif; fill: #8d9098; }
#ruler text { font: italic 7px "Noto Sans", sans-serif; fill: #707070; }

.browser { position: absolute; top: 4px; left: 4px; width: 300px; }
.panel-head { display: flex; align-items: center; height: 25px; padding: 0 12px 0 6px; background: #f5f5f5; border: 1px solid #dcdcdc; }
.panel-head h2 { flex: 1; }
.panel-head button svg { width: 8px; height: 8px; }
.collapse { width: 10px; height: 6px; margin-right: 11px; }
.comments { position: absolute; left: 4px; bottom: 4px; width: 300px; padding-left: 27px; border-top-color: #f5f5f5; }
.tree { display: flex; flex-direction: column; align-items: flex-start; gap: 4px; padding-top: 5px; }
.row { display: flex; align-items: center; height: 20px; margin-left: 29px; padding-right: 12px; background: #f5f5f5; }
.row.root { margin-left: 11px; padding-right: 8px; }
.row .tw { width: 22px; height: 20px; justify-content: center; margin-right: 6px; }
.row.root .tw { margin-right: 3px; }
.row .tw svg { width: 10px; height: 10px; }
.bar { width: 5px; height: 20px; margin: 0 3px 0 -3px; }
.root .bar { margin-left: 0; }
.eye svg { width: 16px; height: 12px; }
.row .kind { width: 16px; height: 14px; margin: 0 14px 0 9px; }
.row .kind.only { margin-left: 0; }
.row .kind.tall { height: 16px; }
.name { white-space: nowrap; }
.pick { display: flex; align-items: center; height: 20px; margin-left: 6px; padding-right: 6px; background: #d9d9d9; font-family: "Open Sans", sans-serif; font-weight: 600; }
.row .pick .kind { margin-left: 3px; }
.radio { appearance: none; width: 13px; height: 13px; margin: 0 0 0 4px; border: 1px solid #444; border-radius: 50%; background: radial-gradient(#333 0 2px, #fff 3px); }

.navbar { position: absolute; left: 50%; bottom: 6px; margin-left: -116px; height: 24px; display: flex; align-items: center; gap: 7px; padding: 0 2px 2px; background: #f5f5f5; }
.navbar svg { width: 18px; height: 18px; }
.navbar .drop { gap: 4px; margin-right: -3px; }
.navbar .drop:first-child { margin-right: 0; }
.navbar .drop:last-child { margin-right: 0; }
.navbar .caret { width: 7px; height: 5px; }

.timeline { flex: none; height: 44px; background: linear-gradient(#f6f6f6, #eee); border-bottom: 1px solid #333; }
.scroll { height: 10px; padding: 4px 5px 0; }
.thumb { width: 21%; height: 6px; border-radius: 2px; background: #d9d9d9; }
.timeline-row { display: flex; height: 33px; }
.playback { width: 143px; display: flex; align-items: center; gap: 11px; padding: 9px 0 0 10px; }
.playback svg { width: 14px; height: 14px; fill: #808080; }
.track { flex: 1; min-width: 0; display: flex; overflow: hidden; }
.span { flex: none; }
.span-bar { height: 6px; margin: 0 3px 0 1px; }
.steps { display: flex; }
.step { width: 24px; height: 27px; flex-direction: column; }
.step svg { width: 17px; height: 17px; margin: 1px 1px 0 0; }
.step::after { content: ""; width: 2px; height: 5px; margin-top: 3px; background: #c4c4c4; }
.step.hit { background: linear-gradient(rgba(250, 176, 70, .5) 0 21px, transparent 21px); }
.settings { width: 21px; padding-top: 9px; }
.settings svg { width: 16px; height: 16px; }
```
FILE: script.js
```js
const groups = [
  ["CREATE", "sketch extrude revolve hole pattern form gen"],
  ["MODIFY", "presspull fillet shell combine split move params"],
  ["ASSEMBLE", "insertc newc joint"],
  ["CONFIGURE", "config ctable rule"],
  ["CONSTRUCT", "plane"],
  ["INSPECT", "measure section"],
  ["INSERT", "derive image mesh"],
  ["SELECT", "select"]
];
document.getElementById("groups").innerHTML = groups.map(([label, icons]) =>
  `<div class="group"><div class="tools">${icons.split(" ").map(i =>
    `<button class="${i === "select" ? "on" : ""}" aria-label="${i}"><svg><use href="#i-${i}"/></svg></button>`).join("")}</div>
   <button class="group-label">${label} <svg class="caret"><use href="#caret"/></svg></button></div>`).join("");

const eye = id => `<button class="eye" aria-label="Visibility"><svg><use href="#${id}"/></svg></button>`;
const kind = (id, cls = "") => `<svg class="kind ${cls}"><use href="#${id}"/></svg>`;
const twist = id => `<button class="tw" aria-label="Expand"><svg><use href="#${id}"/></svg></button>`;
const bar = c => `<span class="bar" style="background:${c}"></span>`;
const name = t => `<span class="name">${t}</span>`;
const rows = [
  kind("gear", "only tall") + name("Document Settings"),
  kind("folder", "only") + name("Named Views"),
  eye("eye") + kind("folder") + name("Origin"),
  eye("eye") + kind("folder") + name("Bodies"),
  eye("eyeoff") + kind("folder") + name("Sketches"),
  ...[["#ffb266", "Back Wall:1"], ["#e6cb5f", "Bottom Base:1"], ["#4650d2", "Tray CD:1"],
    ["#f4858f", "Side Wall Left (CORRECT DIM..."], ["#5ffb5f", "Side Wall Right:1"], ["#6a50f5", "Top Tray:1"]]
    .map(([c, t]) => bar(c) + eye("eye") + kind("body", "tall") + name(t))
];
document.getElementById("tree").innerHTML =
  `<li class="row root">${twist("chevd")}${bar("#c4f56e")}${eye("eye")}<span class="pick">${kind("asm", "tall")}Paper Tray Week 1</span><input class="radio" type="radio" checked aria-label="Activate component"></li>` +
  rows.map(r => `<li class="row">${twist("chev")}${r}</li>`).join("");

// Timeline: colour of the owning component, then its features. Upper case marks a highlighted feature.
const lime = "#c4f56e", orange = "#ffb266", blue = "#4650d2", pink = "#f4858f", gold = "#e6cb5f", green = "#5ffb5f", violet = "#6a50f5";
const spans = [[lime, "seeessen"], [orange, "sSss"], [lime, "c"], [orange, "ese"], [lime, "n"], [blue, "g"], [lime, "nj"],
  [pink, "sEssEses"], [orange, "se"], [pink, "s"], [gold, "E"], [pink, "e"], [lime, "n"], [green, "sessesesse"],
  [lime, "j"], [orange, "se"], [blue, "SeSeSeSeSe"], [lime, "n"], [violet, "g"], [lime, "j"], [violet, "sesesesese"], [lime, "j"], [orange, "s"]];
document.getElementById("track").innerHTML = spans.map(([c, f]) =>
  `<div class="span"><div class="span-bar" style="background:${c}"></div><div class="steps">${[...f].map(k =>
    `<button class="step ${k < "a" ? "hit" : ""}" aria-label="Feature"><svg><use href="#t-${k.toLowerCase()}"/></svg></button>`).join("")}</div></div>`).join("");

// Ground grid: 40 x 40 minor cells with a slight perspective along the long edge.
const far = i => { const u = i / 40; return u / (u + (1 - u) * 1.034); };
const point = (i, j) => [312 + 983 * far(i) + 313 * j / 40, 625.5 - 77 * far(i) + 230 * j / 40];
const line = (a, b, c, w = 1) => `<path d="M${a.map(n => n.toFixed(1))}L${b.map(n => n.toFixed(1))}" stroke="${c}" stroke-width="${w}"/>`;
let grid = "";
for (let k = 0; k <= 40; k++) {
  const edge = k === 0 || k === 40;
  grid += line(point(0, k), point(40, k), edge ? "#909090" : k % 5 === 1 ? "#c6c6c6" : "#ececec");
  grid += line(point(k, 0), point(k, 40), edge ? "#909090" : k % 5 === 4 ? "#cfcfcf" : "#f0f0f0");
}
document.getElementById("grid").innerHTML = grid;

let ruler = "";
const mark = ([x, y], dx, dy, r, t) => { ruler += `<text transform="translate(${(x + dx).toFixed(1)} ${(y + dy).toFixed(1)}) rotate(${r})">${t}</text>`; };
for (let k = 0; k <= 39; k++) {
  const p = point(0, k);
  mark(p, -5, 5, -5, (k + 4) % 5 * 2 || 0);
  if (k % 2) mark(p, -18, 8, -5, Math.abs(k - 11) / 2 | 0);
}
for (let k = 2; k < 40; k += 2) {
  mark(point(k, 40), 0, 7, -5, Math.abs(k - 9) * 5);
  if (k > 1) mark(point(k, 40), 14, 4, -5, k % 10);
}
document.getElementById("ruler").innerHTML = ruler;
```
